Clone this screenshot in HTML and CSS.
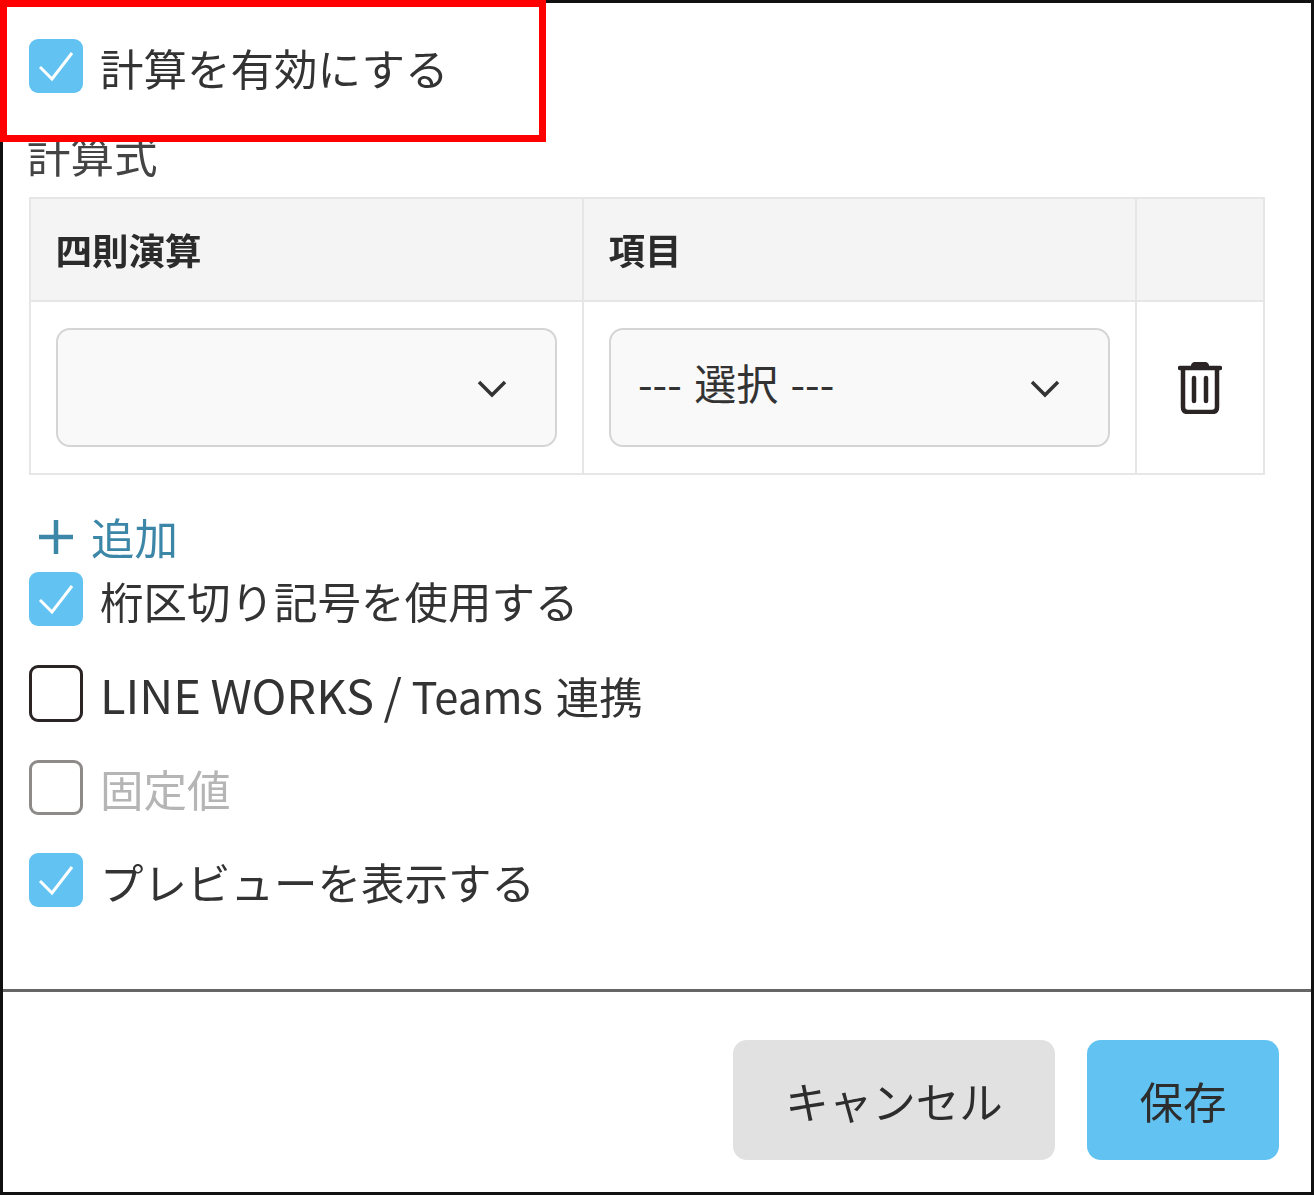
FILE: index.html
```html
<!DOCTYPE html>
<html lang="ja">
<head>
<meta charset="utf-8">
<title>計算設定</title>
<link rel="stylesheet" href="styles.css">
</head>
<body>
<div class="frame">
  <main class="main">
    <label class="check first"><span class="box on"><svg viewBox="0 0 54 54"><path d="M11 28 L23 40 L43 14"/></svg></span><span class="text">計算を有効にする</span></label>
    <div class="formula-label">計算式</div>
    <div class="table">
      <div class="cell head">四則演算</div>
      <div class="cell head">項目</div>
      <div class="cell head last"></div>
      <div class="cell body"><div class="select"><span></span><svg class="chev" viewBox="0 0 30 20"><path d="M2 3 L15 16 L28 3"/></svg></div></div>
      <div class="cell body"><div class="select"><span>--- 選択 ---</span><svg class="chev" viewBox="0 0 30 20"><path d="M2 3 L15 16 L28 3"/></svg></div></div>
      <div class="cell body last trash-cell">
        <svg class="trash" viewBox="0 0 44 52"><path class="t" d="M2 6 H42 M15 5 Q15 2 18 2 H26 Q29 2 29 5"/><path class="t" d="M5 7 V45 Q5 50 10 50 H34 Q39 50 39 45 V7"/><path class="t" d="M16 16 V39 M28 16 V39"/></svg>
      </div>
    </div>
    <div class="add"><svg class="plus" viewBox="0 0 36 36"><path d="M18 1 V35 M1 18 H35"/></svg><span>追加</span></div>
    <label class="check"><span class="box on"><svg viewBox="0 0 54 54"><path d="M11 28 L23 40 L43 14"/></svg></span><span class="text">桁区切り記号を使用する</span></label>
    <label class="check"><span class="box off"></span><span class="text"><span class="wide">LINE WORKS / </span>Teams 連携</span></label>
    <label class="check muted"><span class="box disabled"></span><span class="text">固定値</span></label>
    <label class="check"><span class="box on"><svg viewBox="0 0 54 54"><path d="M11 28 L23 40 L43 14"/></svg></span><span class="text">プレビューを表示する</span></label>
  </main>
  <footer class="footer">
    <button class="btn cancel">キャンセル</button>
    <button class="btn save">保存</button>
  </footer>
</div>
<div class="highlight"></div>
</body>
</html>
```
FILE: styles.css
```css
* { box-sizing: border-box; }
html, body { margin: 0; padding: 0; }
body {
  position: relative;
  width: 1314px;
  height: 1195px;
  background: #fff;
  color: #333;
  font-family: "Noto Sans CJK JP", "Noto Sans", sans-serif;
  font-size: 43.5px;
  font-weight: 400;
  overflow: hidden;
}
.frame {
  height: 1195px;
  border: 3px solid #111;
  display: flex;
  flex-direction: column;
}
.main {
  flex: 1;
  padding: 36px 46px 0 26px;
  filter: blur(0.7px);
}
.check {
  display: flex;
  align-items: center;
  height: 54px;
  margin-bottom: 40px;
  gap: 17px;
  line-height: 54px;
}
.check .text { white-space: nowrap; position: relative; top: 2px; word-spacing: 3px; }
.wide { font-size: 47px; word-spacing: -1px; }
.first { margin-bottom: 39px; }
.box {
  flex: none;
  width: 54px;
  height: 54px;
  border-radius: 9px;
  display: block;
}
.box svg { display: block; width: 54px; height: 54px; }
.box path { fill: none; stroke: #fff; stroke-width: 3; }
.on { background: #62c3f2; }
.off { border: 3px solid #2b2424; height: 57px; }
.disabled { border: 3px solid #8e8a8a; height: 55px; }
.muted { margin-top: 2px; margin-bottom: 39px; }
.muted .text { color: #b5b5b5; }
.formula-label {
  line-height: 50px;
  height: 50px;
  margin: -2px 0 17px -2px;
  color: #444;
}
.table {
  display: grid;
  grid-template-columns: 553px 553px 128px;
  grid-template-rows: 103px 173px;
  width: 1236px;
  border-top: 2px solid #e6e6e6;
  border-left: 2px solid #e6e6e6;
}
.cell {
  border-right: 2px solid #e6e6e6;
  border-bottom: 2px solid #e6e6e6;
}
.head {
  background: #f4f4f4;
  font-size: 36.5px;
  font-weight: 700;
  line-height: 102px;
  padding-left: 24.5px;
  color: #2b2b2b;
}
.body { padding: 26px 25px 0 25px; background: #fff; }
.select {
  height: 119px;
  width: 501px;
  background: #f9f9f9;
  border: 2px solid #d5d5d5;
  border-radius: 14px;
  display: flex;
  align-items: center;
  justify-content: space-between;
  padding: 0 48px 0 27px;
}
.select span {
  font-size: 42px;
  word-spacing: 3px;
  white-space: nowrap;
  padding-bottom: 12px;
}
.chev { width: 30px; height: 20px; margin-top: 3px; }
.chev path { fill: none; stroke: #333; stroke-width: 3.5; }
.trash-cell { display: flex; align-items: center; justify-content: center; padding: 0; }
.trash { width: 44px; height: 52px; }
.t { fill: none; stroke: #2b2424; stroke-width: 4.5; stroke-linecap: round; }
.add {
  display: flex;
  align-items: center;
  gap: 17px;
  height: 54px;
  margin: 35px 0 8px 9px;
  color: #3c86a8;
  line-height: 54px;
}
.plus { width: 36px; height: 36px; }
.plus path { stroke: #3c86a8; stroke-width: 4.5; fill: none; }
.footer {
  flex: none;
  height: 203px;
  border-top: 3px solid #666;
  display: flex;
  justify-content: flex-end;
  align-items: flex-start;
  gap: 32px;
  padding: 48px 32px 0 0;
}
.btn {
  height: 120px;
  border: 0;
  border-radius: 14px;
  font: inherit;
  color: #2d2d2d;
  filter: blur(0.5px);
}
.cancel { width: 322px; background: #e1e1e1; }
.save { width: 192px; background: #62c3f2; }
.highlight {
  position: absolute;
  left: 0;
  top: 0;
  width: 546px;
  height: 142px;
  border: 7px solid #ff0000;
}
```
